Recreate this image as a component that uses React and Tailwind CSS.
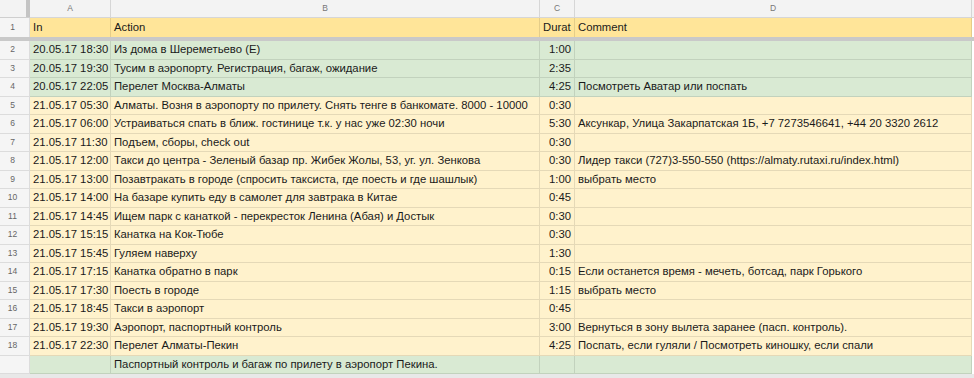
import React from "react";

const rows = [
  ["2", "20.05.17 18:30", "Из дома в Шереметьево (E)", "1:00", "", "g"],
  ["3", "20.05.17 19:30", "Тусим в аэропорту. Регистрация, багаж, ожидание", "2:35", "", "g"],
  ["4", "20.05.17 22:05", "Перелет Москва-Алматы", "4:25", "Посмотреть Аватар или поспать", "g"],
  ["5", "21.05.17 05:30", "Алматы. Возня в аэропорту по прилету. Снять тенге в банкомате. 8000 - 10000", "0:30", "", "y"],
  ["6", "21.05.17 06:00", "Устраиваться спать в ближ. гостинице т.к. у нас уже 02:30 ночи", "5:30", "Аксункар, Улица Закарпатская 1Б, +7 7273546641, +44 20 3320 2612", "y"],
  ["7", "21.05.17 11:30", "Подъем, сборы, check out", "0:30", "", "y"],
  ["8", "21.05.17 12:00", "Такси до центра - Зеленый базар пр. Жибек Жолы, 53, уг. ул. Зенкова", "0:30", "Лидер такси (727)3-550-550 (https://almaty.rutaxi.ru/index.html)", "y"],
  ["9", "21.05.17 13:00", "Позавтракать в городе (спросить таксиста, где поесть и где шашлык)", "1:00", "выбрать место", "y"],
  ["10", "21.05.17 14:00", "На базаре купить еду в самолет для завтрака в Китае", "0:45", "", "y"],
  ["11", "21.05.17 14:45", "Ищем парк с канаткой - перекресток Ленина (Абая) и Достык", "0:30", "", "y"],
  ["12", "21.05.17 15:15", "Канатка на Кок-Тюбе", "0:30", "", "y"],
  ["13", "21.05.17 15:45", "Гуляем наверху", "1:30", "", "y"],
  ["14", "21.05.17 17:15", "Канатка обратно в парк", "0:15", "Если останется время - мечеть, ботсад, парк Горького", "y"],
  ["15", "21.05.17 17:30", "Поесть в городе", "1:15", "выбрать место", "y"],
  ["16", "21.05.17 18:45", "Такси в аэропорт", "0:45", "", "y"],
  ["17", "21.05.17 19:30", "Аэропорт, паспортный контроль", "3:00", "Вернуться в зону вылета заранее (пасп. контроль).", "y"],
  ["18", "21.05.17 22:30", "Перелет Алматы-Пекин", "4:25", "Поспать, если гуляли / Посмотреть киношку, если спали", "y"],
  ["", "", "Паспортный контроль и багаж по прилету в аэропорт Пекина.", "", "", "g"],
];

const cell = "flex items-center overflow-hidden whitespace-nowrap border-r border-b border-black/10 px-[3px]";

function Row({ num, a, b, c, d, tone }) {
  const bg = tone === "g" ? "bg-[#d9ead3]" : "bg-[#fff2cc]";
  return (
    <div className="flex h-[18.5px]">
      <div className="flex w-[30px] shrink-0 items-center justify-center border-r border-b border-[#dcdcdc] bg-[#f5f5f5] pr-[4px] text-[8.5px] text-[#666]">
        {num}
      </div>
      <div className={`${cell} ${bg} w-[81px] shrink-0`}>{a}</div>
      <div className={`${cell} ${bg} w-[429px] shrink-0`}>{b}</div>
      <div className={`${cell} ${bg} w-[35px] shrink-0 justify-end`}>{c}</div>
      <div className={`${cell} ${bg} w-[397px] shrink-0`}>{d}</div>
      <div className="flex-1 bg-white" />
    </div>
  );
}

export default function App() {
  return (
    <div
      className="h-[378px] w-[974px] overflow-hidden bg-[#e8e8e8] text-[11.3px] text-[#1a1a1a]"
      style={{ fontFamily: '"Liberation Sans", Arial, sans-serif' }}
    >
      {/* column letters */}
      <div className="flex h-[18px] bg-[#f3f3f3] text-[8.5px] text-[#777]">
        <div className="flex w-[30px] shrink-0 border-b border-[#cfcfcf]">
          <div className="w-[26px]" />
          <div className="w-[4px] bg-[#c4c4c4]" />
        </div>
        <div className="flex w-[81px] shrink-0 items-center justify-center border-r border-b border-[#d6d6d6]">A</div>
        <div className="flex w-[429px] shrink-0 items-center justify-center border-r border-b border-[#d6d6d6]">B</div>
        <div className="flex w-[35px] shrink-0 items-center justify-center border-r border-b border-[#d6d6d6]">C</div>
        <div className="flex w-[397px] shrink-0 items-center justify-center border-r border-b border-[#d6d6d6]">D</div>
        <div className="flex-1 border-b border-[#d6d6d6]" />
      </div>

      {/* header row */}
      <div className="flex h-[19px]">
        <div className="flex w-[30px] shrink-0 items-center justify-center border-r border-[#dcdcdc] bg-[#f5f5f5] pr-[4px] text-[8.5px] text-[#666]">
          1
        </div>
        <div className={`${cell} w-[81px] shrink-0 border-b-0 bg-[#ffe599]`}>In</div>
        <div className={`${cell} w-[429px] shrink-0 border-b-0 bg-[#ffe599]`}>Action</div>
        <div className={`${cell} w-[35px] shrink-0 border-b-0 bg-[#ffe599]`}>Durat</div>
        <div className={`${cell} w-[397px] shrink-0 border-b-0 bg-[#ffe599]`}>Comment</div>
        <div className="flex-1 bg-white" />
      </div>

      {/* frozen divider */}
      <div className="h-[4px] bg-[#c9c9c9]" />

      {rows.map(([num, a, b, c, d, tone], i) => (
        <Row key={i} num={num} a={a} b={b} c={c} d={d} tone={tone} />
      ))}
    </div>
  );
}
